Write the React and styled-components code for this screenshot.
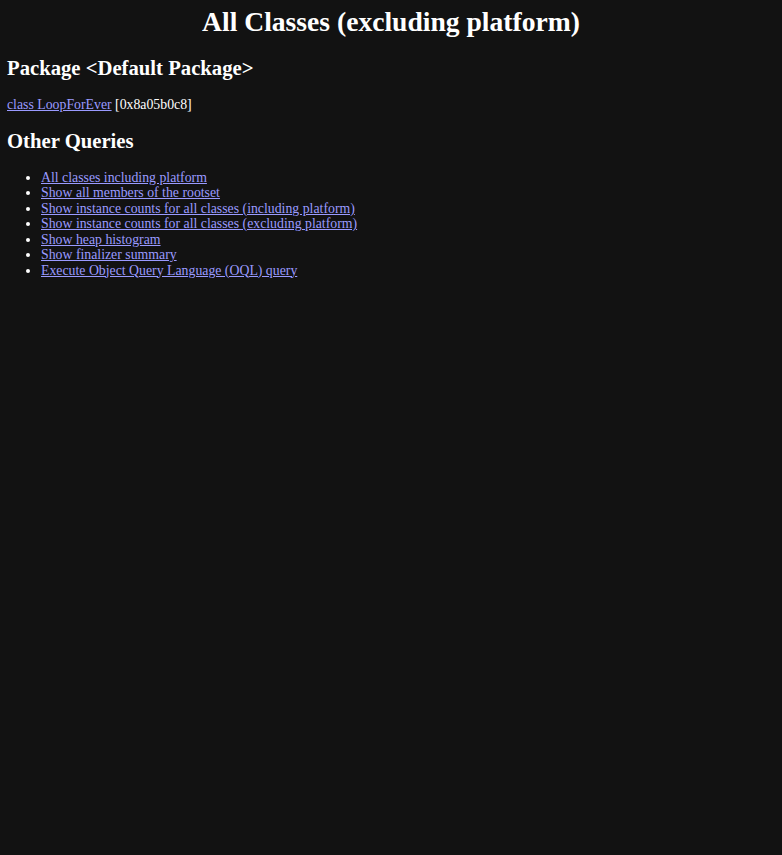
import React from 'react';
import styled, { createGlobalStyle } from 'styled-components';

const GlobalStyle = createGlobalStyle`
  html, body {
    background: #121212;
  }

  body {
    margin: 0;
    padding: 6px 7px;
    color: #ffffff;
    font-family: "Liberation Serif", "Times New Roman", serif;
    font-size: 13.8px;
    line-height: 15.5px;
  }
`;

const Page = styled.div`
  display: flex;
  flex-direction: column;
`;

const Title = styled.h1`
  margin: 0 0 20px;
  text-align: center;
  font-size: 27.6px;
  line-height: 31px;
  font-weight: bold;
`;

const Heading = styled.h2`
  margin: ${props => (props.first ? '0' : '18px')} 0 16px;
  font-size: 20.7px;
  line-height: 23.5px;
  font-weight: bold;
`;

const Para = styled.p`
  margin: 0;
`;

const Link = styled.a`
  color: #9a9aff;
  text-decoration: underline;
`;

const QueryList = styled.ul`
  margin: 0;
  padding-left: 34px;
  list-style: disc;
`;

const queries = [
  'All classes including platform',
  'Show all members of the rootset',
  'Show instance counts for all classes (including platform)',
  'Show instance counts for all classes (excluding platform)',
  'Show heap histogram',
  'Show finalizer summary',
  'Execute Object Query Language (OQL) query',
];

const App = () => (
  <Page>
    <GlobalStyle />
    <Title>All Classes (excluding platform)</Title>
    <Heading first>Package &lt;Default Package&gt;</Heading>
    <Para>
      <Link href="#class">class LoopForEver</Link> [0x8a05b0c8]
    </Para>
    <Heading>Other Queries</Heading>
    <QueryList>
      {queries.map(q => (
        <li key={q}>
          <Link href="#q">{q}</Link>
        </li>
      ))}
    </QueryList>
  </Page>
);

export default App;
